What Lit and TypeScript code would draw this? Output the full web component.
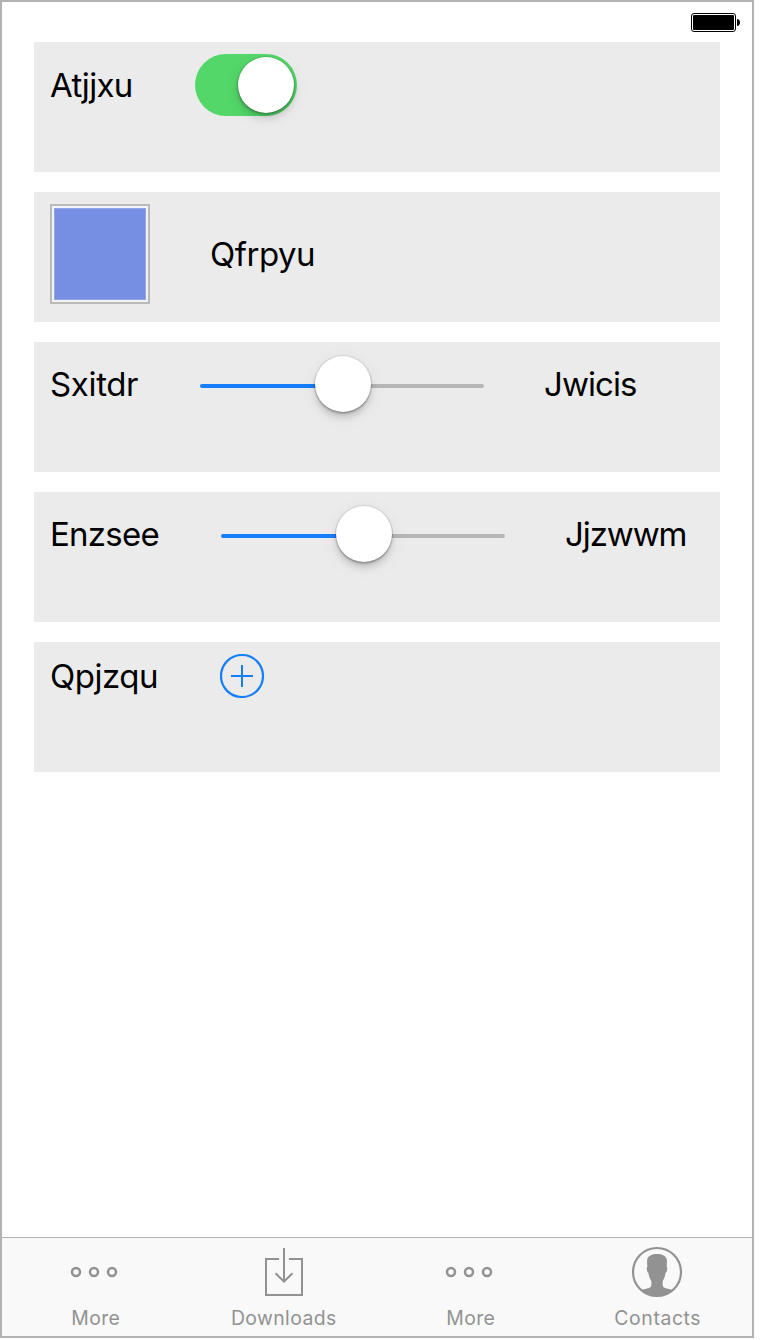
import { LitElement, html, css, svg } from "lit";
import { customElement, property } from "lit/decorators.js";

@customElement("ios-slider")
class IosSlider extends LitElement {
  @property({ type: Number }) value = 0.5;
  static styles = css`
    :host { display: block; width: 284px; height: 62px; }
    .track {
      display: flex; align-items: center; position: relative; top: 1px;
      height: 62px;
    }
    .fill { height: 4px; border-radius: 2px 0 0 2px; background: #157efb; }
    .rest { height: 4px; flex: 1; border-radius: 0 2px 2px 0; background: #b6b6b6; }
    .thumb {
      width: 56px; height: 56px; margin: -4px -28px 0; border-radius: 50%;
      background: #fff; position: relative; z-index: 1; flex: none;
      box-shadow: 0 0 1px 1px rgba(0,0,0,.1), 0 2px 2px rgba(0,0,0,.22), 0 6px 6px rgba(0,0,0,.13), 0 4px 20px rgba(0,0,0,.06);
    }
  `;
  render() {
    return html`<div class="track">
      <div class="fill" style="width:${this.value * 284 + 1}px"></div>
      <div class="thumb"></div>
      <div class="rest"></div>
    </div>`;
  }
}

@customElement("app-root")
class AppRoot extends LitElement {
  static styles = css`
    :host {
      display: block; width: 760px; height: 1340px; background: #fff;
      font-family: Inter, "Open Sans", sans-serif; color: #000;
    }
    .phone {
      box-sizing: border-box; width: 754px; height: 1338px;
      border: 2px solid #b2b2b2; background: #fff;
      display: flex; flex-direction: column;
    }
    .status { height: 40px; display: flex; justify-content: flex-end; padding-right: 12px; flex: none; }
    .status svg { margin-top: 10px; }
    .cards { display: flex; flex-direction: column; gap: 20px; padding: 0 32px; flex: 1; }
    .card {
      box-sizing: border-box; height: 130px; background: #ebebeb;
      display: flex; align-items: flex-start; padding: 12px 16px 0;
    }
    .label { font-size: 33px; line-height: 40px; white-space: nowrap; flex: none; margin-top: 10px; }
    .l1 { width: 145px; margin-top: 11px; letter-spacing: -.7px; }
    .l2 { margin: 30px 0 0 60px; letter-spacing: -.5px; }
    .l3 { width: 150px; letter-spacing: -.35px; }
    .l4 { width: 171px; letter-spacing: -.75px; }
    .l5 { width: 170px; margin-top: 2px; letter-spacing: -.5px; }
    .value { margin-left: 60px; }
    .v3 { letter-spacing: -.95px; }
    .v4 { letter-spacing: -1.1px; }
    .switch {
      box-sizing: border-box; width: 102px; height: 62px; border-radius: 31px;
      background: #53d769; display: flex; justify-content: flex-end; padding: 3px;
    }
    .knob {
      width: 56px; height: 56px; border-radius: 50%; background: #fff;
      box-shadow: 0 0 2px rgba(0,0,0,.25), 0 2px 3px rgba(0,0,0,.25), 0 6px 8px rgba(0,0,0,.11), 0 4px 20px rgba(0,0,0,.06);
    }
    .swatch {
      box-sizing: border-box; width: 100px; height: 100px; padding: 2px;
      border: 2px solid #b9b9b9; background: #f1f3fb; display: flex;
    }
    .color { flex: 1; background: #768fe2; box-shadow: inset 0 0 0 1px rgba(255,255,255,.2); }
    .tabs {
      box-sizing: border-box; height: 99px; flex: none; background: #f9f9f9;
      border-top: 1px solid #b2b2b2; display: grid;
      grid-template-columns: repeat(4, 187.5px);
    }
    .tab { display: flex; flex-direction: column; align-items: center; color: #929292; }
    .tab svg { margin-top: 8px; overflow: visible; }
    .name { font-size: 19.4px; line-height: 24px; margin-top: 8px; letter-spacing: .4px; }
    .tab:nth-child(2) .name { padding-left: 1px; }
    .tab:nth-child(4) .name { letter-spacing: .6px; padding-right: 1px; }
  `;

  private dots() {
    return svg`<g fill="none" stroke="currentColor" stroke-width="2.500">
      <circle cx="6" cy="26" r="4"/><circle cx="24" cy="26" r="4"/><circle cx="42" cy="26" r="4"/></g>`;
  }

  private download() {
    return svg`<g fill="none" stroke="currentColor" stroke-width="2">
      <path d="M22 13H9v36h36V13H32"/><path d="M27 2v33"/><path d="M18.500 27.200l8.500 8.300 8.500-8.300"/></g>`;
  }

  private contact() {
    return svg`<g transform="translate(-1 0)"><circle cx="26" cy="26" r="24" fill="none" stroke="currentColor" stroke-width="2.200"/>
      <path fill="currentColor" d="M26 8c5 0 9.300 2 9.800 5.500.3 3-.1 5.500-.2 7.300 1 .2.800 2.200.3 4-.3 1.400-.7 1.900-1.300 2-.5 3.700-1.400 5.600-2.800 7.900-.3 2.300-.3 4.600.2 5.800 1.500 2 6.300 2.300 10 3.700A25 25 0 0 1 10 44.200c3.700-1.400 8.500-1.700 10-3.700.5-1.200.5-3.500.2-5.800-1.400-2.300-2.300-4.200-2.800-7.900-.6-.1-1-.6-1.300-2-.5-1.800-.7-3.800.3-4-.1-1.800-.5-4.300-.2-7.300C16.700 10 21 8 26 8z"/></g>`;
  }

  private tab(name: string, icon: unknown) {
    return html`<div class="tab">
      <svg width="52" height="52" viewBox="0 0 52 52">${icon}</svg>
      <div class="name">${name}</div>
    </div>`;
  }

  render() {
    return html`<div class="phone">
      <div class="status">
        <svg width="50" height="22" viewBox="0 0 50 22">
          <rect x="1.500" y="1.500" width="44" height="18" rx="2.500" fill="none" stroke="#000"/>
          <rect x="3" y="3" width="41" height="15" rx="1" fill="#000"/>
          <path d="M47 7c1.800 0 3 1.600 3 3.500s-1.200 3.500-3 3.500z" fill="#000"/>
        </svg>
      </div>
      <div class="cards">
        <div class="card">
          <div class="label l1">Atjjxu</div>
          <div class="switch"><div class="knob"></div></div>
        </div>
        <div class="card">
          <div class="swatch"><div class="color"></div></div>
          <div class="label l2">Qfrpyu</div>
        </div>
        <div class="card">
          <div class="label l3">Sxitdr</div>
          <ios-slider></ios-slider>
          <div class="label value v3">Jwicis</div>
        </div>
        <div class="card">
          <div class="label l4">Enzsee</div>
          <ios-slider></ios-slider>
          <div class="label value v4">Jjzwwm</div>
        </div>
        <div class="card">
          <div class="label l5">Qpjzqu</div>
          <svg width="44" height="44" viewBox="0 0 44 44" fill="none" stroke="#157efb" stroke-width="2">
            <circle cx="22" cy="22" r="21" stroke-width="2.200"/><path d="M11 22h22M22 11v22"/>
          </svg>
        </div>
      </div>
      <div class="tabs">
        ${this.tab("More", this.dots())}
        ${this.tab("Downloads", this.download())}
        ${this.tab("More", this.dots())}
        ${this.tab("Contacts", this.contact())}
      </div>
    </div>`;
  }
}
